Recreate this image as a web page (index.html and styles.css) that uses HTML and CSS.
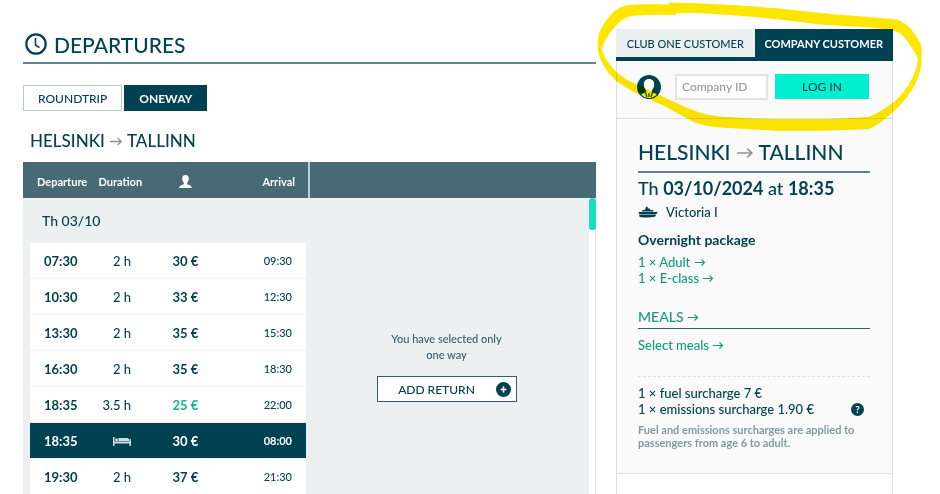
FILE: index.html
```html
<!DOCTYPE html>
<html lang="en">

<head>
    <meta charset="UTF-8">
    <meta name="viewport" content="width=device-width, initial-scale=1.0">
    <title>Departures</title>

    <link rel="stylesheet" href="styles.css">
</head>

<body>

    <svg class="defs" width="0" height="0" aria-hidden="true">
        <symbol id="arrow" viewBox="0 0 16 12">
            <path d="M1 6h13M10 2l4 4-4 4" fill="none" stroke="currentColor" stroke-width="1.5" />
        </symbol>
    </svg>

    <div class="page">
        <main class="main">
            <h1 class="title">
                <svg class="clock" viewBox="0 0 22 22" aria-hidden="true">
                    <circle cx="11" cy="11" r="9.7" fill="none" stroke="currentColor" stroke-width="2.2" />
                    <path d="M10.5 5v7l4 2.600" fill="none" stroke="currentColor" stroke-width="1.6" />
                </svg>
                DEPARTURES
            </h1>

            <div class="trip-type">
                <button class="trip">ROUNDTRIP</button>
                <button class="trip active">ONEWAY</button>
            </div>

            <h2 class="route">HELSINKI <svg class="arrow" aria-hidden="true"><use href="#arrow" /></svg> TALLINN</h2>

            <div class="board">
                <table class="times">
                    <thead>
                        <tr>
                            <th class="dep">Departure</th>
                            <th class="dur">Duration</th>
                            <th class="price">
                                <svg class="person" viewBox="0 0 13 13" role="img" aria-label="Price">
                                    <path d="M6.500 0C8.700 0 10 1.400 9.800 3.700 9.700 5.600 9 6.800 8.200 7.700v1.500c1.500.7 4.300 1 4.600 3.800H.2C.5 10.200 3.300 9.900 4.800 9.200V7.700C4 6.800 3.300 5.600 3.200 3.700 3 1.400 4.300 0 6.500 0z" fill="currentColor" />
                                </svg>
                            </th>
                            <th class="arr">Arrival</th>
                        </tr>
                    </thead>
                    <tbody>
                        <tr class="day">
                            <th colspan="4">Th 03/10</th>
                        </tr>
                        <tr>
                            <td class="dep">07:30</td>
                            <td class="dur">2 h</td>
                            <td class="price">30 €</td>
                            <td class="arr">09:30</td>
                        </tr>
                        <tr>
                            <td class="dep">10:30</td>
                            <td class="dur">2 h</td>
                            <td class="price">33 €</td>
                            <td class="arr">12:30</td>
                        </tr>
                        <tr>
                            <td class="dep">13:30</td>
                            <td class="dur">2 h</td>
                            <td class="price">35 €</td>
                            <td class="arr">15:30</td>
                        </tr>
                        <tr>
                            <td class="dep">16:30</td>
                            <td class="dur">2 h</td>
                            <td class="price">35 €</td>
                            <td class="arr">18:30</td>
                        </tr>
                        <tr>
                            <td class="dep">18:35</td>
                            <td class="dur">3.5 h</td>
                            <td class="price cheap">25 €</td>
                            <td class="arr">22:00</td>
                        </tr>
                        <tr class="selected">
                            <td class="dep">18:35</td>
                            <td class="dur">
                                <svg class="bed" viewBox="0 0 18 9" role="img" aria-label="Overnight">
                                    <path d="M0 0h1.500v4.500h15V2H18v7h-1.500V6.500h-15V9H0zM2.300 1.500h2.500v2.500H2.300zM5.500 1h9l1.500 1v2H5.500z" fill="currentColor" />
                                </svg>
                            </td>
                            <td class="price">30 €</td>
                            <td class="arr">08:00</td>
                        </tr>
                        <tr>
                            <td class="dep">19:30</td>
                            <td class="dur">2 h</td>
                            <td class="price">37 €</td>
                            <td class="arr">21:30</td>
                        </tr>
                    </tbody>
                </table>

                <div class="return">
                    <div class="return-head"></div>
                    <div class="return-body">
                        <div class="return-info">
                            <p>You have selected only<br>one way</p>
                            <button class="add-return">
                                <span>ADD RETURN</span>
                                <svg class="plus" viewBox="0 0 15 15" aria-hidden="true">
                                    <circle cx="7.500" cy="7.500" r="7.500" fill="#004152" />
                                    <path d="M7.500 4.500v6M4.500 7.500h6" stroke="#fff" stroke-width="1.600" />
                                </svg>
                            </button>
                        </div>
                        <div class="scrollbar">
                            <div class="thumb"></div>
                        </div>
                    </div>
                </div>
            </div>
        </main>

        <aside class="sidebar">
            <div class="tabs">
                <button class="tab">CLUB ONE CUSTOMER</button>
                <button class="tab active">COMPANY CUSTOMER</button>
            </div>

            <form class="login">
                <svg class="avatar" viewBox="0 0 24 24" aria-hidden="true">
                    <circle cx="12" cy="12" r="12" fill="#004152" />
                    <path d="M12 4c3.500 0 5.300 2.300 5.100 5.500-.1 2.700-1 4.600-2.300 6v1.700c1.600.8 3.700 1.100 5 2.300A11 11 0 0 1 12 23a11 11 0 0 1-7.800-3.500c1.300-1.200 3.400-1.500 5-2.300V15.500c-1.300-1.400-2.200-3.300-2.300-6C6.700 6.300 8.500 4 12 4z" fill="#fff" />
                    <path d="M8.500 17.500l1.500 4.500M15.500 17.500L14 22M12 18v4" stroke="#004152" stroke-width="1.200" />
                </svg>
                <input class="company-id" type="text" placeholder="Company ID" aria-label="Company ID">
                <button class="log-in" type="button">LOG IN</button>
            </form>

            <section class="summary">
                <h2 class="summary-route">HELSINKI <svg class="arrow" aria-hidden="true"><use href="#arrow" /></svg> TALLINN</h2>
                <p class="date">Th <b>03/10/2024</b> at <b>18:35</b></p>
                <p class="ship">
                    <svg class="ship-icon" viewBox="0 0 20 12" aria-hidden="true">
                        <path d="M7.500 2.500L8 .8h1.600l.3 1.700h2l.5 1.500h2.600l.7 1.500h-12L4.500 4l2.500-.3zM.3 6h19.400l-1.200 2H1.400zM1 8.400h17.300c-.6 1-.9 1.800-1.300 2.300-5 1-10 1-15.300.2z" fill="currentColor" />
                    </svg>
                    Victoria I
                </p>

                <h3 class="package">Overnight package</h3>
                <ul class="items">
                    <li><a href="#">1 × Adult <svg class="arrow" aria-hidden="true"><use href="#arrow" /></svg></a></li>
                    <li><a href="#">1 × E-class <svg class="arrow" aria-hidden="true"><use href="#arrow" /></svg></a></li>
                </ul>

                <h3 class="meals"><a href="#">MEALS <svg class="arrow" aria-hidden="true"><use href="#arrow" /></svg></a></h3>
                <p class="select-meals"><a href="#">Select meals <svg class="arrow" aria-hidden="true"><use href="#arrow" /></svg></a></p>

                <div class="surcharges">
                    <p>1 × fuel surcharge 7 €</p>
                    <p class="with-help">
                        1 × emissions surcharge 1.90 €
                        <button class="help" aria-label="Help">?</button>
                    </p>
                    <p class="note">Fuel and emissions surcharges are applied to passengers from age 6 to adult.</p>
                </div>
            </section>

            <!-- marker ring around the login box -->
            <svg class="marker" viewBox="0 0 1050 420" aria-hidden="true">
                <path fill="#ffe600" fill-rule="evenodd" d="M236 8C290 8 330 9 365 12C440 15 500 20 560 25C620 31 670 38 720 42L830 50C870 54 900 55 925 60C945 70 955 78 965 90C980 108 990 125 995 140V185C993 202 990 216 985 230C977 252 968 270 955 285C942 304 928 320 910 335C888 355 862 378 835 387C790 390 745 390 700 392H560C500 390 450 385 400 383C365 380 335 376 310 365C272 347 240 325 210 312C180 298 155 286 130 275C105 262 85 248 70 235C52 218 40 197 30 175C26 164 23 152 23 140C23 124 24 110 28 98C36 78 48 60 62 45C75 30 88 22 110 16C150 12 190 12 236 14zM258 45L257 40C280 39 305 39 330 40C390 42 445 47 500 52C550 56 600 62 650 68C680 72 698 74 715 75L830 82C855 85 872 85 890 88C907 90 922 95 932 102C944 112 954 124 960 136C970 150 978 162 984 175C984 190 980 203 975 215C967 236 957 254 945 270C932 288 917 303 900 315C880 328 860 343 832 351C790 354 745 356 700 357H560C505 357 450 353 400 350C374 348 352 344 330 338C298 327 270 314 240 300L160 262C132 250 110 240 90 225C74 212 60 196 50 180C43 168 37 156 35 145C39 134 44 124 50 115C60 98 72 82 85 70C98 57 112 50 130 47C172 44 215 44 258 45z" />
            </svg>
        </aside>
    </div>

</body>

</html>
```
FILE: styles.css
```css
* {
    box-sizing: border-box;
}

body {
    margin: 0;
    font-family: Lato, sans-serif;
    font-size: 13px;
    font-weight: 500;
    color: #004152;
    background-color: #fff;
}

h1, h2, h3, p, ul {
    margin: 0;
    padding: 0;
    font-weight: 500;
}

ul {
    list-style: none;
}

button, input {
    font-family: inherit;
    font-weight: inherit;
    color: inherit;
    border: none;
    border-radius: 0;
    padding: 0;
}

a {
    color: #159a80;
    text-decoration: none;
}

.defs {
    position: absolute;
}

.arrow {
    width: 12px;
    height: 9px;
}

.page {
    display: grid;
    grid-template-columns: 573fr 277fr;
    gap: 20px;
    height: 100vh;
    padding: 29px 47px 0 23px;
    overflow: hidden;
}

.main {
    min-width: 0;
}

.title {
    display: flex;
    align-items: center;
    gap: 7px;
    height: 35px;
    padding: 0 2px 3px;
    border-bottom: 2px solid #5d838b;
    font-size: 21px;
}

.clock {
    width: 22px;
    height: 22px;
}

.trip-type {
    display: flex;
    gap: 2px;
    margin-top: 21px;
}

.trip {
    height: 26px;
    padding: 0 14px;
    border: 1px solid #b5cbcf;
    background-color: #fff;
    font-size: 12px;
}

.trip.active {
    background-color: #004152;
    border-color: #004152;
    color: #fff;
    font-weight: bold;
}

.route {
    padding: 17px 7px 9px;
    font-size: 17px;
    line-height: 25px;
}

.route .arrow, .summary-route .arrow {
    color: #8e9292;
}

.route .arrow {
    width: 14px;
    height: 11px;
}

.board {
    display: grid;
    grid-template-columns: 285fr 288fr;
    height: 340px;
    background-color: #ecf0f1;
}

.times {
    width: 100%;
    height: max-content;
    border-collapse: separate;
    border-spacing: 0;
    table-layout: fixed;
}

.times th {
    font-weight: 500;
    text-align: left;
}

.times thead th {
    height: 36px;
    padding: 2px 0 0;
    background-color: #486a75;
    color: #fff;
    font-size: 11px;
    font-weight: bold;
}

.times td {
    height: 36px;
    padding: 0;
    border-bottom: 1px solid #ecf0f1;
    background-color: #fff;
    font-size: 13px;
}

.times .dep {
    width: 26%;
    padding-left: 14px;
}

.times td.dep {
    border-left: 7px solid #ecf0f1;
    font-weight: bold;
}

.times .dur {
    width: 20%;
    padding-right: 12px;
    text-align: right;
}

.times td.dur {
    padding-right: 23px;
}

.times .price {
    width: 22%;
    padding-right: 0;
    text-align: center;
}

.times td.price {
    font-weight: bold;
}

.times .arr {
    padding-right: 13px;
    text-align: right;
}

.times td.arr {
    border-right: 2px solid #ecf0f1;
    padding-right: 14px;
    font-size: 11px;
}

.times .day th {
    height: 45px;
    padding: 0 19px;
    font-size: 14px;
}

.times .cheap {
    color: #10b899;
}

.times .selected td {
    background-color: #004152;
    color: #fff;
    font-weight: bold;
}

.person {
    width: 13px;
    height: 13px;
    vertical-align: middle;
}

.bed {
    width: 18px;
    height: 9px;
    color: #cfdee0;
}

.return {
    display: flex;
    flex-direction: column;
}

.return-head {
    height: 36px;
    border-left: 2px solid #c3d0d3;
    background-color: #486a75;
}

.return-body {
    display: flex;
    flex: 1;
}

.return-info {
    flex: 1;
    display: flex;
    flex-direction: column;
    align-items: center;
    padding-top: 133px;
    padding-right: 4px;
    font-size: 11px;
    font-weight: bold;
    line-height: 16px;
    text-align: center;
    color: #2f5f6b;
}

.add-return {
    display: flex;
    align-items: center;
    width: 140px;
    height: 26px;
    margin-top: 13px;
    padding-right: 5px;
    border: 1px solid #2f5f6b;
    background-color: #fff;
    color: #004152;
    font-size: 12px;
    font-weight: 500;
}

.add-return span {
    flex: 1;
}

.plus {
    width: 15px;
    height: 15px;
}

.scrollbar {
    width: 7px;
    border-right: 1px solid #e4e9ea;
    background-color: #fff;
}

.thumb {
    width: 7px;
    height: 32px;
    border-radius: 3px;
    background-color: #16dfc0;
}

.sidebar {
    position: relative;
    min-width: 0;
    border: 1px solid #dcdfdf;
    border-width: 0 1px;
}

.tabs {
    display: flex;
    margin: 0 -1px;
    border-bottom: 4px solid #004152;
}

.tab {
    flex: 1;
    height: 28px;
    background-color: #ecf0f1;
    font-size: 11px;
    white-space: nowrap;
}

.tab.active {
    background-color: #004152;
    color: #fff;
    font-weight: bold;
}

.login {
    display: flex;
    align-items: center;
    height: 58px;
    padding: 0 23px 6px 20px;
    border-bottom: 1px solid #dcdfdf;
    background-color: #fafafa;
}

.avatar {
    width: 24px;
    height: 24px;
    margin-right: 14px;
}

.company-id {
    width: 93px;
    height: 26px;
    margin-right: 7px;
    padding: 0 5px;
    border: 2px solid #e2e4e4;
    background-color: #fff;
    font-size: 12px;
}

.company-id::placeholder {
    color: #999;
}

.log-in {
    flex: 1;
    height: 25px;
    background-color: #00f0cf;
    font-size: 12px;
}

.summary {
    padding: 18px 22px 24px 21px;
    border-bottom: 1px solid #dcdfdf;
    background-color: #fafafa;
}

.summary-route {
    height: 36px;
    border-bottom: 2px solid #5d838b;
    font-size: 21px;
    line-height: 30px;
}

.summary-route .arrow {
    width: 18px;
    height: 14px;
}

.date {
    font-size: 18px;
    line-height: 30px;
}

.ship {
    display: flex;
    align-items: center;
    gap: 8px;
    line-height: 18px;
}

.ship-icon {
    width: 20px;
    height: 12px;
}

.package {
    margin-top: 10px;
    font-size: 14px;
    font-weight: bold;
    line-height: 18px;
}

.items {
    margin-top: 5px;
    line-height: 16px;
}

.meals {
    height: 23px;
    margin-top: 20px;
    border-bottom: 1px solid #2f5f6b;
    font-size: 14px;
    line-height: 22px;
}

.select-meals {
    margin-top: 7px;
    line-height: 18px;
}

.surcharges {
    margin-top: 22px;
    padding-top: 8px;
    border-top: 1px dashed #dcdfdf;
    line-height: 16px;
}

.with-help {
    display: flex;
    align-items: center;
    justify-content: space-between;
    padding-right: 6px;
}

.help {
    width: 13px;
    height: 13px;
    border-radius: 50%;
    background-color: #004152;
    color: #fff;
    font-size: 10px;
    font-weight: bold;
    line-height: 13px;
}

.note {
    margin-top: 6px;
    color: #7f9ba1;
    font-size: 11px;
    font-weight: bold;
    line-height: 13px;
}

.marker {
    position: absolute;
    top: -29px;
    left: -27px;
    width: 350px;
    height: 140px;
    mix-blend-mode: multiply;
    pointer-events: none;
}
```
